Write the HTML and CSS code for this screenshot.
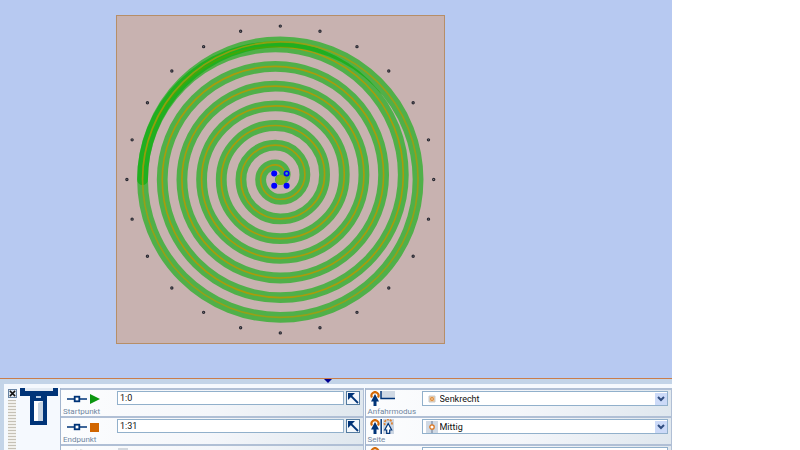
FILE: index.html
```html
<!DOCTYPE html>
<html lang="de">
<head>
<meta charset="utf-8">
<title>Konturfräsen</title>
<link rel="stylesheet" href="styles.css">
</head>
<body>
<svg class="defs" aria-hidden="true">
  <symbol id="node" viewBox="0 0 20 10">
    <path d="M0 5h7M13 5h7" stroke="#003478" stroke-width="1.5"/>
    <rect x="7.7" y="2.7" width="4.600" height="4.600" fill="#fff" stroke="#003478" stroke-width="1.8"/>
  </symbol>
  <symbol id="tool" viewBox="0 0 10 15">
    <path d="M2 6.500A3.500 3.500 0 1 1 8 6.500" fill="none" stroke="#d56a08" stroke-width="2.200"/>
    <path d="M5 3L9 10.500H6.500V15H3.500V10.500H1z" fill="#003478"/>
  </symbol>
  <symbol id="pick" viewBox="0 0 12 12">
    <path d="M1 1h7L1 8z" fill="#003478"/>
    <path d="M3 3l8 8" stroke="#003478" stroke-width="1.800"/>
  </symbol>
  <path id="spiral" d="M0 0a1 1 0 0 0 1-1a2 2 0 0 0-2-2a3 3 0 0 0-3 3a4 4 0 0 0 4 4a5 5 0 0 0 5-5a6 6 0 0 0-6-6a7 7 0 0 0-7 7a8 8 0 0 0 8 8a9 9 0 0 0 9-9a10 10 0 0 0-10-10a11 11 0 0 0-11 11a12 12 0 0 0 12 12a13 13 0 0 0 13-13a14 14 0 0 0-14-14a15 15 0 0 0-15 15a16 16 0 0 0 16 16a17 17 0 0 0 17-17a18 18 0 0 0-18-18a19 19 0 0 0-19 19a20 20 0 0 0 20 20a21 21 0 0 0 21-21a22 22 0 0 0-22-22a23 23 0 0 0-23 23a24 24 0 0 0 24 24a25 25 0 0 0 25-25a26 26 0 0 0-26-26a27 27 0 0 0-27 27"/>
</svg>
<div class="app">
  <main class="canvas">
    <svg class="board" viewBox="116 15 329 329" role="img" aria-label="Spirale">
      <rect class="plate" x="116.500" y="15.500" width="328" height="328"/>
      <g transform="translate(280.3 179.600) scale(4.920)">
        <use href="#spiral" class="band"/>
        <use href="#spiral" class="line"/>
        <circle class="band" r="28"/>
        <circle class="line outer" r="28"/>
      </g>
      <circle class="hub" cx="280.8" cy="180" r="5"/>
      <g fill="#00f">
        <circle cx="274.200" cy="173.400" r="3"/><circle cx="286.600" cy="173.400" r="3"/>
        <circle cx="274.200" cy="185.800" r="3"/><circle cx="286.600" cy="185.800" r="3"/>
      </g>
      <circle cx="286.600" cy="173.400" r="1.300" fill="#3aa8a0"/>
      <circle class="holes" cx="280.300" cy="179.500" r="153.400" pathLength="24"/>
      <circle class="holes core" cx="280.300" cy="179.500" r="153.400" pathLength="24"/>
    </svg>
  </main>
  <div class="splitter"><span class="caret"></span></div>
  <section class="panel">
    <div class="grip">
      <button class="close" type="button" aria-label="Schließen"><svg viewBox="0 0 8 8"><path d="M1 1l6 6M7 1l-6 6" stroke="#111" stroke-width="1.700"/></svg></button>
      <div class="ridges"></div>
    </div>
    <svg class="cutter" viewBox="0 0 38 38">
      <path d="M0 0H5V3H33V0H38V8H0z" fill="#003478"/>
      <path d="M5 0h28v3H5z" fill="#e3eaf2"/>
      <path d="M10 8h17v29H10z" fill="#003478"/>
      <path d="M14 13h9v20h-9z" fill="#fff"/><path d="M18 15l5-2v20h-5z" fill="#c9d5e2"/>
      <path d="M16 8h5v2h-5z" fill="#b8cde5"/>
    </svg>
    <div class="column">
      <div class="row">
        <label class="name" for="start"><svg class="pair" viewBox="0 0 33 15"><use href="#node" y="3" width="20" height="10"/><path d="M23 3v10l10-5z" fill="#0b9610"/></svg><span>Startpunkt</span></label>
        <input id="start" type="text" value="1:0">
        <button class="pick" type="button" aria-label="Startpunkt wählen"><svg viewBox="0 0 12 12"><use href="#pick"/></svg></button>
      </div>
      <div class="row">
        <label class="name" for="end"><svg class="pair" viewBox="0 0 33 15"><use href="#node" y="3" width="20" height="10"/><path d="M23 4h9v9h-9z" fill="#d06500"/></svg><span>Endpunkt</span></label>
        <input id="end" type="text" value="1:31">
        <button class="pick" type="button" aria-label="Endpunkt wählen"><svg viewBox="0 0 12 12"><use href="#pick"/></svg></button>
      </div>
      <div class="row">
        <div class="name"><svg class="pair" viewBox="0 0 33 15"><path d="M5 10a7 7 0 0 1 5-8v10M13 2a7 7 0 0 1 6 8h-6" fill="#ddd"/></svg></div>
        <svg class="tick" viewBox="0 0 10 10"><path d="M0 1h10v9H0z" fill="#d3d8df"/></svg>
      </div>
    </div>
    <div class="column wide">
      <div class="row">
        <label class="name" for="mode"><svg class="pair" viewBox="0 0 33 15"><use href="#tool" x="2" width="10" height="15"/><path d="M13 0h14v7H13z" fill="#d0d9e4"/><path d="M13 0v7.500H27" fill="none" stroke="#003478" stroke-width="1.500"/></svg><span>Anfahrmodus</span></label>
        <div class="combo">
          <svg viewBox="0 0 12 12"><path d="M3 3h6v6H3z" fill="#f2c58f" stroke="#c5cbd3"/><circle cx="6" cy="6" r="1.500" fill="none" stroke="#dd8a3e"/></svg>
          <select id="mode"><option>Senkrecht</option></select>
          <svg class="drop" viewBox="0 0 12 12"><path d="M3 4l3 3 3-3" fill="none" stroke="#304d80" stroke-width="2"/></svg>
        </div>
      </div>
      <div class="row">
        <label class="name" for="side"><svg class="pair" viewBox="0 0 33 15"><use href="#tool" x="2" width="10" height="15"/><path d="M15 0h11v15H15z" fill="#ccd6e3"/><path d="M13.200 0v15" stroke="#003478" stroke-width="1.500"/><path d="M17 6A3.700 3.700 0 1 1 23.500 6" fill="none" stroke="#df8130" stroke-width="1.800" stroke-dasharray="2 1"/><path d="M20.200 4.500L23.700 11H21.700V14.300H18.700V11H16.700z" fill="#fff" stroke="#003478" stroke-width="1.200"/></svg><span>Seite</span></label>
        <div class="combo">
          <svg viewBox="0 0 12 12"><path d="M0 0h12v12H0z" fill="#d0d9e4"/><path d="M6 0v12" stroke="#667994"/><circle cx="6" cy="6" r="2.200" fill="#fff" stroke="#dc7722" stroke-width="1.300"/></svg>
          <select id="side"><option>Mittig</option></select>
          <svg class="drop" viewBox="0 0 12 12"><path d="M3 4l3 3 3-3" fill="none" stroke="#304d80" stroke-width="2"/></svg>
        </div>
      </div>
      <div class="row">
        <div class="name"><svg class="pair" viewBox="0 0 33 15"><use href="#tool" x="2" width="10" height="15"/></svg></div>
        <div class="combo"></div>
      </div>
    </div>
  </section>
</div>
</body>
</html>
```
FILE: styles.css
```css
* { box-sizing: border-box; }
body {
  margin: 0;
  height: 100vh;
  overflow: hidden;
  background: #fff;
  font-family: Roboto, "Liberation Sans", sans-serif;
  font-size: 9px;
}
svg { display: block; }
.defs { position: absolute; width: 0; height: 0; }
.app {
  width: 84%;
  height: 100%;
  display: flex;
  flex-direction: column;
  overflow: hidden;
}

/* drawing area */
.canvas {
  flex: 1;
  min-height: 0;
  padding: 15px 0 34px 116px;
  background: #b7c9f1;
}
.board { height: 100%; aspect-ratio: 1; }
.plate { fill: #c8b2b0; stroke: #b68e68; }
.band {
  fill: none;
  stroke: rgb(0 175 5 / 60%);
  stroke-width: 2.2px;
  stroke-linecap: round;
}
.line { fill: none; stroke: #a89c0c; stroke-width: 0.34px; }
.outer { opacity: 0.8; }
.hub { fill: #90b414; opacity: 0.85; }
.holes {
  fill: none;
  stroke: #292932;
  stroke-width: 3.4px;
  stroke-linecap: round;
  stroke-dasharray: 0 1;
}
.core { stroke: #8c8487; stroke-width: 1px; }

.splitter {
  height: 6px;
  flex: none;
  background: #c3d4e8;
  border-top: 1px solid #c97d4b;
  padding-left: 324px;
}
.caret {
  display: block;
  width: 8px;
  border: 4px solid transparent;
  border-top-color: #000090;
  border-bottom: 0;
}

/* parameter panel */
.panel {
  flex: none;
  height: 66px;
  display: flex;
  padding-top: 4px;
  border-left: 4px solid #c3d4e8;
  background: #f5f9fe;
}
.grip { width: 9px; margin: 1px 3px 0 4px; }
.close {
  display: block;
  width: 9px;
  height: 9px;
  padding: 0;
  border: 1px solid #6884a4;
  background: #dce6f0;
}
.close svg { width: 7px; height: 7px; }
.ridges {
  height: 60px;
  margin: 2px 1px 0 0;
  background: repeating-linear-gradient(#c5c1b6 0 1px, #f1f0ec 1px 3px);
}
.cutter { width: 38px; height: 38px; flex: none; margin-right: 1px; }
.column {
  flex: 303;
  margin-left: 1px;
  border-left: 1px solid #a3b5ce;
  border-right: 1px solid #b0bfd5;
}
.wide { flex: 307; }
.row {
  height: 28px;
  display: flex;
  align-items: flex-start;
  padding: 1px 3px 0 2px;
  border-top: 2px solid #b0bfd5;
  background: linear-gradient(100deg, #fcfdfe, #f4f6fa 50%, #dfe7ee);
}
.name { width: 54px; color: #70869f; font-size: 8px; line-height: 12px; white-space: nowrap; }
.name span { display: block; }
.pair { width: 33px; height: 15px; margin-left: 4px; }
.wide .pair { margin-left: 0; }
.tick { width: 10px; height: 10px; margin-left: 1px; }
input {
  flex: 1;
  min-width: 0;
  height: 14px;
  padding: 0 2px;
  border: 1px solid #91b0cb;
  background: #fff;
  font: inherit;
  color: #111;
}
.pick {
  width: 14px;
  height: 14px;
  margin-left: 2px;
  padding: 0;
  border: 1px solid #537ba0;
  background: #f4f8fc;
}
.pick svg { width: 12px; height: 12px; }
.combo {
  flex: 1;
  height: 15px;
  display: flex;
  align-items: center;
  border: 1px solid #91b0cb;
  background: #fff;
}
.combo svg { width: 12px; height: 12px; margin-left: 3px; }
.combo select {
  flex: 1;
  height: 13px;
  margin-left: 2px;
  padding: 0;
  border: 0;
  appearance: none;
  background: transparent;
  font: inherit;
  color: #111;
}
.combo .drop { background: #ccdaf8; margin: 0; }
```
